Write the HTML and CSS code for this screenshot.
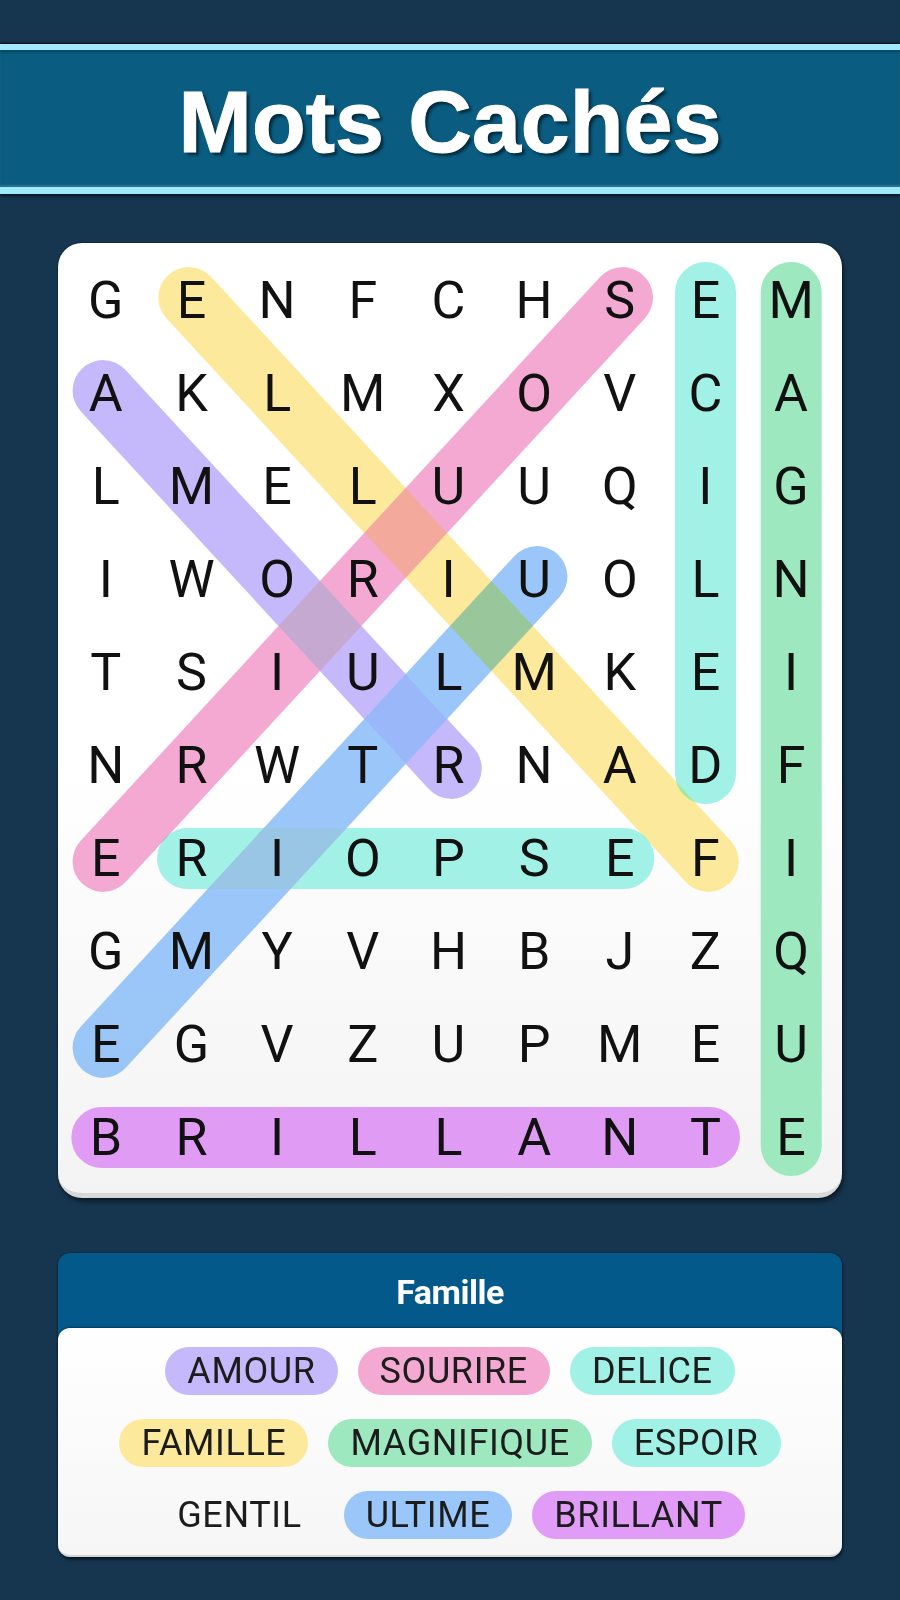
FILE: index.html
```html
<!DOCTYPE html>
<html lang="fr">
<head>
<meta charset="utf-8">
<title>Mots Cachés</title>
<link rel="stylesheet" href="styles.css">
</head>
<body>
<header class="topbar">
  <h1 class="title">Mots Cachés</h1>
</header>

<main class="card">
  <div class="board">
    <svg class="marks" width="771" height="930" viewBox="0 0 771 930" aria-hidden="true">
      <g stroke-width="61" stroke-linecap="round" fill="none">
        <line class="m-purple" x1="40.1" y1="136.6" x2="388.2" y2="514.4"/>
        <line class="m-yellow" x1="125.8" y1="43.6" x2="645.2" y2="607.4"/>
        <line class="m-pink" x1="559.5" y1="43.6" x2="40.1" y2="607.4"/>
        <line class="m-cyan" x1="642.5" y1="38.5" x2="642.5" y2="519.5"/>
        <line class="m-green" x1="728.2" y1="38.5" x2="728.2" y2="891.5"/>
        <line class="m-cyan" x1="124.5" y1="604.5" x2="560.8" y2="604.5"/>
        <line class="m-blue" x1="473.9" y1="322.6" x2="40.1" y2="793.4"/>
        <line class="m-violet" x1="38.8" y1="883.5" x2="646.5" y2="883.5"/>
      </g>
    </svg>
    <div class="grid">
      <span>G</span><span>E</span><span>N</span><span>F</span><span>C</span><span>H</span><span>S</span><span>E</span><span>M</span>
      <span>A</span><span>K</span><span>L</span><span>M</span><span>X</span><span>O</span><span>V</span><span>C</span><span>A</span>
      <span>L</span><span>M</span><span>E</span><span>L</span><span>U</span><span>U</span><span>Q</span><span>I</span><span>G</span>
      <span>I</span><span>W</span><span>O</span><span>R</span><span>I</span><span>U</span><span>O</span><span>L</span><span>N</span>
      <span>T</span><span>S</span><span>I</span><span>U</span><span>L</span><span>M</span><span>K</span><span>E</span><span>I</span>
      <span>N</span><span>R</span><span>W</span><span>T</span><span>R</span><span>N</span><span>A</span><span>D</span><span>F</span>
      <span>E</span><span>R</span><span>I</span><span>O</span><span>P</span><span>S</span><span>E</span><span>F</span><span>I</span>
      <span>G</span><span>M</span><span>Y</span><span>V</span><span>H</span><span>B</span><span>J</span><span>Z</span><span>Q</span>
      <span>E</span><span>G</span><span>V</span><span>Z</span><span>U</span><span>P</span><span>M</span><span>E</span><span>U</span>
      <span>B</span><span>R</span><span>I</span><span>L</span><span>L</span><span>A</span><span>N</span><span>T</span><span>E</span>
    </div>
  </div>
</main>

<section class="words">
  <div class="words-head">Famille</div>
  <div class="words-body">
    <div class="chip-row">
      <span class="chip c-purple">AMOUR</span>
      <span class="chip c-pink">SOURIRE</span>
      <span class="chip c-cyan">DELICE</span>
    </div>
    <div class="chip-row">
      <span class="chip c-yellow">FAMILLE</span>
      <span class="chip c-green">MAGNIFIQUE</span>
      <span class="chip c-cyan">ESPOIR</span>
    </div>
    <div class="chip-row">
      <span class="chip">GENTIL</span>
      <span class="chip c-blue">ULTIME</span>
      <span class="chip c-violet">BRILLANT</span>
    </div>
  </div>
</section>
</body>
</html>
```

FILE: styles.css
```css
* { box-sizing: border-box; }

html, body {
  margin: 0;
  padding: 0;
}

body {
  background: #163650;
  width: 900px;
  height: 1600px;
  overflow: hidden;
  font-family: Roboto, "Liberation Sans", sans-serif;
}

.topbar {
  margin-top: 44px;
  height: 150px;
  background: #0a5c81;
  border-top: 6px solid #a0eafc;
  border-bottom: 7px solid #a0eafc;
  box-shadow: 0 -1px 2px rgba(0, 0, 0, 0.8), 0 2px 3px rgba(0, 0, 0, 0.6),
              inset 0 3px 2px rgba(0, 0, 0, 0.18), inset 0 -2px 2px rgba(255, 255, 255, 0.15);
  display: flex;
  align-items: center;
  justify-content: center;
}

.title {
  margin: 0;
  font-family: "Liberation Sans", Arial, sans-serif;
  font-weight: 700;
  font-size: 88px;
  line-height: 1;
  color: #ffffff;
  text-shadow: 3px 3px 3px rgba(0, 0, 0, 0.55);
  padding-top: 6px;
  -webkit-text-stroke: 1px #ffffff;
}

.card {
  display: block;
  margin: 49px 0 0 58px;
  width: 784px;
  padding: 11px 8px 9px 5px;
  background: linear-gradient(#ffffff 55%, #f3f3f3);
  border-radius: 24px;
  border-bottom: 5px solid #d8d8d8;
  box-shadow: 0 0 2px rgba(0, 0, 0, 0.7), 2px 4px 4px rgba(0, 0, 0, 0.45);
}

.board {
  position: relative;
  width: 771px;
  height: 930px;
}

.marks {
  position: absolute;
  left: 0;
  top: 0;
}

.marks line { mix-blend-mode: darken; }
.m-purple { stroke: #c5b8fb; }
.m-pink { stroke: #f3a9d1; }
.m-yellow { stroke: #fde99b; }
.m-cyan { stroke: #a2f1e6; }
.m-green { stroke: #9de8bf; }
.m-blue { stroke: #9ac6f9; }
.m-violet { stroke: #e09cf6; }

.grid {
  position: relative;
  display: grid;
  grid-template-columns: repeat(9, 85.667px);
  grid-template-rows: repeat(10, 93px);
  font-family: Roboto, "Liberation Sans", sans-serif;
  font-size: 52px;
  color: #111111;
}

.grid span {
  display: flex;
  align-items: center;
  justify-content: center;
  line-height: 1;
}

.words {
  margin: 55px 0 0 58px;
  width: 784px;
  background: #03598a;
  border-radius: 12px;
  box-shadow: 0 0 2px rgba(0, 0, 0, 0.6), 1px 3px 3px rgba(0, 0, 0, 0.45);
}

.words-head {
  height: 75px;
  display: flex;
  align-items: center;
  justify-content: center;
  color: #ffffff;
  font-family: Roboto, "Liberation Sans", sans-serif;
  font-weight: 700;
  font-size: 34px;
  letter-spacing: -0.5px;
  padding-top: 2px;
}

.words-body {
  background: linear-gradient(#ffffff, #f6f6f6);
  border-radius: 12px;
  padding: 19px 0 16px;
  display: flex;
  flex-direction: column;
  align-items: center;
  gap: 24px;
  box-shadow: 0 -1px 2px rgba(0, 0, 0, 0.35);
  border-bottom: 2px solid #d6d6d6;
}

.chip-row {
  display: flex;
  justify-content: center;
  gap: 20px;
}

.chip {
  height: 48px;
  line-height: 48px;
  padding: 0 22px;
  border-radius: 24px;
  font-size: 36px;
  letter-spacing: 0.6px;
  color: #1c1c1c;
  white-space: nowrap;
}

.c-purple { background: #c5b8fb; }
.c-pink { background: #f3a9d1; }
.c-yellow { background: #fde99b; }
.c-cyan { background: #a2f1e6; }
.c-green { background: #9de8bf; }
.c-blue { background: #9ac6f9; }
.c-violet { background: #e09cf6; }
```
